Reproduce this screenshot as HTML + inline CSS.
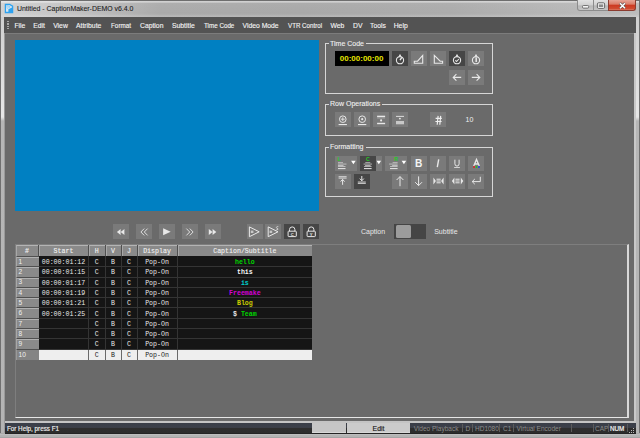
<!DOCTYPE html><html><head><meta charset="utf-8"><style>
*{margin:0;padding:0;box-sizing:border-box}
html,body{width:640px;height:438px;overflow:hidden;background:#707070;font-family:"Liberation Sans",sans-serif}
div{position:absolute}
.mi{top:21.7px;font-size:6.8px;color:#f4f4f4;white-space:pre;line-height:8px;-webkit-text-stroke:0.12px #f4f4f4}
.grp{border:1px solid #d6d6d6}
.gl{font-size:7px;color:#f0f0f0;background:#6a6a6a;padding:0 2.2px 0 1px;-webkit-text-stroke:0.1px #f0f0f0;line-height:8px;white-space:pre}
.b{width:16px;height:15px;background:#7a7a7a}
.d{background:#464646}
.st{font-size:6.3px;white-space:pre;line-height:8px}
.mono{font-family:"Liberation Mono",monospace;font-size:6.6px;line-height:8px;white-space:pre;text-align:center}
</style></head><body>
<div style="left:0;top:0;width:640px;height:17px;background:linear-gradient(90deg,#d2d2d2 0,#cdcdcd 20px,#bebebe 90px,#aaaaaa 160px,#a8a8a8 300px,#ababab 450px,#b6b6b6 560px,#bcbcbc 640px);border-top:1px solid #6e6e6e"></div>
<div style="left:0;top:1px;width:640px;height:16px;background:linear-gradient(rgba(255,255,255,0.45) 0,rgba(255,255,255,0.45) 1px,rgba(255,255,255,0.05) 2.5px,rgba(255,255,255,0) 12px,rgba(255,255,255,0.06) 13.8px,rgba(255,255,255,0.16) 15px,rgba(255,255,255,0.16) 16px)"></div>
<div style="left:0;top:1px;width:1px;height:437px;background:#707070"></div>
<div style="left:1px;top:17px;width:3px;height:421px;background:linear-gradient(#cfcfcf 0,#e4e4e4 90px,#e6e6e6 100px,#b6b6b6 104px,#b4b4b4 100%)"></div>
<div style="left:4px;top:17px;width:1px;height:421px;background:#9a9a9a"></div>
<div style="left:636px;top:17px;width:3px;height:421px;background:linear-gradient(#cfcfcf 0,#e4e4e4 90px,#e6e6e6 100px,#b6b6b6 104px,#b4b4b4 100%)"></div>
<div style="left:639px;top:1px;width:1px;height:437px;background:#707070"></div>
<div style="left:0;top:433px;width:640px;height:5px;background:linear-gradient(#9a9a9a 0,#b8b8b8 1px,#c2c2c2 2px,#a6a6a6 3px,#c0c0c0 4px,#8a8a8a 5px)"></div>
<div style="left:16.9px;top:3.7px;font-size:7.6px;color:#1a1a1a;white-space:pre;line-height:9px;-webkit-text-stroke:0.1px #1a1a1a;transform:scaleX(0.91);transform-origin:0 0">Untitled - CaptionMaker-DEMO v6.4.0</div>
<div style="left:577px;top:0;width:17px;height:11px;border:1px solid #8c8c8c;border-top:none;border-radius:0 0 0 3px;background:linear-gradient(#e2e2e2,#d2d2d2 45%,#b8b8b8 60%,#c6c6c6)"></div>
<div style="left:593px;top:0;width:16px;height:11px;border:1px solid #8c8c8c;border-top:none;background:linear-gradient(#e2e2e2,#d2d2d2 45%,#b8b8b8 60%,#c6c6c6)"></div>
<div style="left:608px;top:0;width:28px;height:11px;border:1px solid #8c3c30;border-top:none;border-radius:0 0 3px 0;background:linear-gradient(#e6a496,#dc7e6a 40%,#cc3a22 55%,#d04a30 85%,#dc7a64)"></div>
<div style="left:4px;top:17px;width:632px;height:16px;background:#535353"></div>
<div style="left:7.4px;top:21.2px;width:1.2px;height:1.3px;background:#a8a8a8"></div>
<div style="left:7.4px;top:23.4px;width:1.2px;height:1.3px;background:#a8a8a8"></div>
<div style="left:7.4px;top:25.6px;width:1.2px;height:1.3px;background:#a8a8a8"></div>
<div style="left:7.4px;top:27.8px;width:1.2px;height:1.3px;background:#a8a8a8"></div>
<div class="mi" style="left:14.4px">File</div>
<div class="mi" style="left:33.2px">Edit</div>
<div class="mi" style="left:53.2px">View</div>
<div class="mi" style="left:76px">Attribute</div>
<div class="mi" style="left:111.2px;transform:scaleX(0.93);transform-origin:0 0">Format</div>
<div class="mi" style="left:140px">Caption</div>
<div class="mi" style="left:172px">Subtitle</div>
<div class="mi" style="left:203.7px;transform:scaleX(0.92);transform-origin:0 0">Time Code</div>
<div class="mi" style="left:242.5px">Video Mode</div>
<div class="mi" style="left:287.5px;transform:scaleX(0.91);transform-origin:0 0">VTR Control</div>
<div class="mi" style="left:330.5px">Web</div>
<div class="mi" style="left:353px">DV</div>
<div class="mi" style="left:370px">Tools</div>
<div class="mi" style="left:393.7px">Help</div>
<div style="left:5px;top:33px;width:631px;height:390px;background:#c8c8c8"></div>
<div style="left:5px;top:33px;width:629px;height:388px;background:#6a6a6a;border-top:1px solid #7c7c7c"></div>
<div style="left:15px;top:39.6px;width:303.6px;height:171.4px;background:#0080c2"></div>
<div class="grp" style="left:325px;top:43px;width:168px;height:51px"></div>
<div class="gl" style="left:329px;top:39.5px">Time Code</div>
<div class="grp" style="left:325px;top:104px;width:168px;height:32px"></div>
<div class="gl" style="left:329px;top:100px">Row Operations</div>
<div class="grp" style="left:325px;top:147px;width:168px;height:50px"></div>
<div class="gl" style="left:329px;top:143px">Formatting</div>
<div style="left:334.5px;top:51px;width:54px;height:15px;background:#000"></div>
<div style="left:339.8px;top:54.3px;font-size:8px;font-weight:bold;color:#e6e600;line-height:9px">00:00:00:00</div>
<div class="b d" style="left:392px;top:51px;width:16px;height:15px"></div>
<div class="b" style="left:411px;top:51px;width:16px;height:15px"></div>
<div class="b" style="left:430px;top:51px;width:16px;height:15px"></div>
<div class="b d" style="left:449px;top:51px;width:16px;height:15px"></div>
<div class="b" style="left:468px;top:51px;width:16px;height:15px"></div>
<div class="b" style="left:449px;top:70px;width:16px;height:15px"></div>
<div class="b" style="left:468px;top:70px;width:16px;height:15px"></div>
<div class="b" style="left:335px;top:112.3px;width:16px;height:15px"></div>
<div class="b" style="left:354px;top:112.3px;width:16px;height:15px"></div>
<div class="b" style="left:373px;top:112.3px;width:16px;height:15px"></div>
<div class="b" style="left:392px;top:112.3px;width:16px;height:15px"></div>
<div class="b" style="left:430px;top:112.3px;width:16px;height:15px"></div>
<div style="left:465.5px;top:116px;font-size:7px;color:#f0f0f0;line-height:8px">10</div>
<div class="b" style="left:335px;top:155.7px;width:22px;height:15px"></div>
<div class="b d" style="left:360px;top:155.7px;width:16px;height:15px"></div>
<div class="b" style="left:376px;top:155.7px;width:6px;height:15px"></div>
<div class="b" style="left:385px;top:155.7px;width:22px;height:15px"></div>
<div class="b" style="left:411px;top:155.7px;width:16px;height:15px"></div>
<div class="b" style="left:430px;top:155.7px;width:16px;height:15px"></div>
<div class="b" style="left:449px;top:155.7px;width:16px;height:15px"></div>
<div class="b" style="left:468px;top:155.7px;width:16px;height:15px"></div>
<div class="b" style="left:335px;top:174px;width:16px;height:15px"></div>
<div class="b d" style="left:354px;top:174px;width:16px;height:15px"></div>
<div class="b" style="left:392px;top:174px;width:16px;height:15px"></div>
<div class="b" style="left:411px;top:174px;width:16px;height:15px"></div>
<div class="b" style="left:430px;top:174px;width:16px;height:15px"></div>
<div class="b" style="left:449px;top:174px;width:16px;height:15px"></div>
<div class="b" style="left:468px;top:174px;width:16px;height:15px"></div>
<div class="b" style="left:113px;top:224px;width:16px;height:15px"></div>
<div class="b" style="left:136px;top:224px;width:16px;height:15px"></div>
<div class="b" style="left:159px;top:224px;width:16px;height:15px"></div>
<div class="b" style="left:182px;top:224px;width:16px;height:15px"></div>
<div class="b" style="left:205px;top:224px;width:16px;height:15px"></div>
<div class="b" style="left:246.5px;top:224px;width:16px;height:15px"></div>
<div class="b" style="left:265px;top:224px;width:16px;height:15px"></div>
<div class="b d" style="left:284px;top:224px;width:16px;height:15px"></div>
<div class="b d" style="left:303px;top:224px;width:16px;height:15px"></div>
<div style="left:361px;top:227.6px;font-size:7px;color:#e8e8e8;line-height:8px">Caption</div>
<div style="left:394px;top:224px;width:32px;height:15px;background:#454545"></div>
<div style="left:395.5px;top:225.3px;width:15px;height:12.5px;background:#9c9c9c;border-radius:1.5px"></div>
<div style="left:434.2px;top:227.6px;font-size:7px;color:#e8e8e8;line-height:8px">Subtitle</div>
<svg style="position:absolute;left:0;top:0" width="640" height="438" viewBox="0 0 640 438"><path d="M5.4,4.5 H9.6 L12.6,6.2 V12.5 H5.4 Z" fill="#dbe8f0" stroke="#2ea2f0" stroke-width="1.3"/><path d="M6.9,5.8 L10.2,6.9 L7.2,8.4 Z" fill="#eef4f8" stroke="#6cbcf0" stroke-width="0.6"/><path d="M8.4,9.2 L12.6,7.2 V12.5 H8.4 Z" fill="#2ea2f0"/><rect x="582.5" y="5.5" width="6.2" height="2.6" rx="1" fill="#f4f4f4" stroke="#5a5a5a" stroke-width="0.8"/><rect x="597.4" y="2.8" width="7.2" height="5.6" rx="1.2" fill="#f4f4f4" stroke="#5a5a5a" stroke-width="0.9"/><rect x="598.8" y="4.4" width="4.4" height="2.6" fill="#8a8a8a"/><path d="M620,3.2 L625,8.2 M625,3.2 L620,8.2" stroke="#505050" stroke-width="2.6"/><path d="M620,3.2 L625,8.2 M625,3.2 L620,8.2" stroke="#ffffff" stroke-width="1.5"/><circle cx="400" cy="60.2" r="3.6" fill="none" stroke="#e8e8e8" stroke-width="1.1"/><rect x="399.1" y="54.6" width="1.8" height="1.6" fill="#e8e8e8"/><path d="M400,60.2 L401.9,57.4" stroke="#e8e8e8" stroke-width="1.4"/><path d="M414.3,61.2 H417.6 L422.7,55.4 V63.3 H414.3 Z" fill="none" stroke="#e8e8e8" stroke-width="1.1"/><path d="M434.3,55.4 L440.2,61.2 H442.6 V63.3 H434.3 Z" fill="none" stroke="#e8e8e8" stroke-width="1.1"/><circle cx="457" cy="60.2" r="3.6" fill="none" stroke="#e8e8e8" stroke-width="1.1"/><rect x="456.1" y="54.6" width="1.8" height="1.6" fill="#e8e8e8"/><path d="M455.2,60.3 L456.6,61.5 L458.9,59" fill="none" stroke="#e8e8e8" stroke-width="1.1"/><circle cx="476" cy="60.2" r="3.6" fill="none" stroke="#e8e8e8" stroke-width="1.1"/><rect x="475.1" y="54.6" width="1.8" height="1.6" fill="#e8e8e8"/><path d="M476.2,57.6 V62" stroke="#e8e8e8" stroke-width="1.5"/><path d="M453.2,77.4 H461.2 M456.4,74.2 L453.2,77.4 L456.4,80.6" fill="none" stroke="#e8e8e8" stroke-width="1.1"/><path d="M471.8,77.4 H479.8 M476.6,74.2 L479.8,77.4 L476.6,80.6" fill="none" stroke="#e8e8e8" stroke-width="1.1"/><circle cx="342.8" cy="119.2" r="3.3" fill="none" stroke="#e8e8e8" stroke-width="1"/><path d="M342.8,117.3 V121.1 M340.9,119.2 H344.7" stroke="#e8e8e8" stroke-width="0.9"/><rect x="338.6" y="124" width="8.3" height="1.1" fill="#e8e8e8"/><circle cx="362.2" cy="119.2" r="3.3" fill="none" stroke="#e8e8e8" stroke-width="1"/><circle cx="362.2" cy="119.2" r="1.1" fill="#e8e8e8"/><rect x="358" y="124" width="8.3" height="1.1" fill="#e8e8e8"/><rect x="377.1" y="115.7" width="8" height="1.3" fill="#e8e8e8"/><rect x="377.1" y="117.5" width="8" height="0.8" fill="#b8b8b8"/><circle cx="381.1" cy="120.4" r="1.05" fill="#e8e8e8"/><rect x="377.1" y="122.8" width="8" height="1.4" fill="#e8e8e8"/><rect x="396" y="115.9" width="8" height="0.9" fill="#e8e8e8"/><circle cx="399.9" cy="118.6" r="0.95" fill="#e8e8e8"/><rect x="396" y="121" width="8" height="3.3" fill="#c8c8c8"/><path d="M438.1,115.9 L437.2,124.7 M440.7,115.9 L439.8,124.7 M435.6,118.4 H441.8 M435.4,121.5 H441.6" stroke="#f0f0f0" stroke-width="1.15"/><text x="339.2" y="160.9" font-size="5.2" font-weight="bold" fill="#22d022" font-family="Liberation Sans" text-anchor="middle">L</text><rect x="338.00" y="162.4" width="5" height="0.7" fill="#d8d8d8"/><rect x="338.00" y="163.7" width="8.5" height="0.7" fill="#d8d8d8"/><rect x="338.00" y="165" width="5.5" height="0.7" fill="#d8d8d8"/><rect x="338.00" y="166.3" width="7.5" height="0.7" fill="#d8d8d8"/><path d="M351.1,160.8 H355.70000000000005 L353.40000000000003,164.3 Z" fill="#ffffff"/><rect x="338" y="168.1" width="7.5" height="1" fill="#e8e8e8"/><text x="367.8" y="160.9" font-size="5.2" font-weight="bold" fill="#22d022" font-family="Liberation Sans" text-anchor="middle">C</text><rect x="365.30" y="162.4" width="5" height="0.7" fill="#d8d8d8"/><rect x="363.55" y="163.7" width="8.5" height="0.7" fill="#d8d8d8"/><rect x="365.05" y="165" width="5.5" height="0.7" fill="#d8d8d8"/><rect x="364.05" y="166.3" width="7.5" height="0.7" fill="#d8d8d8"/><path d="M376.5,160.8 H381.1 L378.8,164.3 Z" fill="#ffffff"/><rect x="364" y="168.1" width="7.6" height="1" fill="#e8e8e8"/><text x="396" y="160.9" font-size="5.2" font-weight="bold" fill="#22d022" font-family="Liberation Sans" text-anchor="middle">R</text><rect x="392.60" y="162.4" width="5" height="0.7" fill="#d8d8d8"/><rect x="389.10" y="163.7" width="8.5" height="0.7" fill="#d8d8d8"/><rect x="392.10" y="165" width="5.5" height="0.7" fill="#d8d8d8"/><rect x="390.10" y="166.3" width="7.5" height="0.7" fill="#d8d8d8"/><path d="M401.6,160.8 H406.20000000000005 L403.90000000000003,164.3 Z" fill="#ffffff"/><rect x="390" y="168.1" width="7.6" height="1" fill="#e8e8e8"/><text x="418.8" y="167.2" font-size="10.2" font-weight="bold" fill="#f4f4f4" font-family="Liberation Sans" text-anchor="middle">B</text><path d="M438.7,159.4 L437.3,167.2" stroke="#e8e8e8" stroke-width="1.4"/><path d="M454.9,159.7 V163.8 Q454.9,166.1 457,166.1 Q459.1,166.1 459.1,163.8 V159.7" fill="none" stroke="#e8e8e8" stroke-width="1"/><rect x="454.1" y="167.1" width="5.8" height="0.8" fill="#e8e8e8"/><path d="M473.7,166 L476.5,159.4 L479.3,166 M474.6,164 H478.4" stroke="#e8e8e8" stroke-width="1.3" fill="none"/><circle cx="474" cy="166.9" r="1" fill="#e02020"/><circle cx="476.5" cy="166.9" r="1" fill="#20c020"/><circle cx="479" cy="166.9" r="1" fill="#2040e0"/><rect x="338.6" y="176.2" width="8" height="0.9" fill="#d8d8d8"/><rect x="338.6" y="177.6" width="8" height="0.9" fill="#e8e8e8"/><path d="M342.6,184.8 V179.6 M340.6,181.6 L342.6,179.4 L344.6,181.6" fill="none" stroke="#e8e8e8" stroke-width="1"/><path d="M361.8,176 V180.6 M359.8,178.6 L361.8,180.8 L363.8,178.6" fill="none" stroke="#e8e8e8" stroke-width="1"/><rect x="357.8" y="181.6" width="8" height="0.9" fill="#e8e8e8"/><rect x="357.8" y="183.1" width="8" height="0.9" fill="#d0d0d0"/><path d="M400,186.2 V176.6 M396.6,180 L400,176.6 L403.4,180" fill="none" stroke="#e8e8e8" stroke-width="1"/><path d="M418.6,176.4 V185.6 M415.2,182.2 L418.6,185.6 L422,182.2" fill="none" stroke="#e8e8e8" stroke-width="1"/><path d="M433.4,177.6 L435.9,181 L433.4,184.4 Z M443.6,177.6 L441.1,181 L443.6,184.4 Z" fill="#e8e8e8"/><rect x="436.5" y="178.7" width="4.2" height="1" fill="#e8e8e8"/><rect x="436.5" y="180.5" width="4.2" height="1" fill="#e8e8e8"/><rect x="436.5" y="182.3" width="4.2" height="1" fill="#e8e8e8"/><path d="M454.4,177.6 L451.9,181 L454.4,184.4 Z M460.8,177.6 L463.3,181 L460.8,184.4 Z" fill="#e8e8e8"/><rect x="455.4" y="178.7" width="4.2" height="1" fill="#e8e8e8"/><rect x="455.4" y="180.5" width="4.2" height="1" fill="#e8e8e8"/><rect x="455.4" y="182.3" width="4.2" height="1" fill="#e8e8e8"/><path d="M480.3,176.8 V181.6 H472.2 M474.8,179 L472.2,181.6 L474.8,184.2" fill="none" stroke="#e8e8e8" stroke-width="1"/><path d="M120.6,228.9 L116.9,232 L120.6,235.1 Z M124.4,228.9 L120.7,232 L124.4,235.1 Z" fill="#e8e8e8"/><path d="M144.2,228.6 L140.9,232 L144.2,235.4 M147.6,228.6 L144.3,232 L147.6,235.4" fill="none" stroke="#e8e8e8" stroke-width="0.9"/><path d="M163.1,228.3 L170.7,231.8 L163.1,235.3 Z" fill="#e8e8e8"/><path d="M186.4,228.6 L189.7,232 L186.4,235.4 M189.8,228.6 L193.1,232 L189.8,235.4" fill="none" stroke="#e8e8e8" stroke-width="0.9"/><path d="M208.8,228.9 L212.5,232 L208.8,235.1 Z M212.6,228.9 L216.3,232 L212.6,235.1 Z" fill="#e8e8e8"/><path d="M249.4,226.9 L259.2,231.8 L249.4,236.7 Z" fill="none" stroke="#e8e8e8" stroke-width="1"/><rect x="250.8" y="230.6" width="2.6" height="2.4" fill="#c8c8c8"/><path d="M268.2,226.9 L278,231.8 L268.2,236.7 Z" fill="none" stroke="#e8e8e8" stroke-width="1"/><rect x="269.6" y="230.6" width="2.6" height="2.4" fill="#c8c8c8"/><path d="M278.3,226.6 Q276.3,226.4 276.4,227.6 Q276.6,228.6 278,228.8 Q278.8,229.6 276.3,229.8" fill="none" stroke="#e8e8e8" stroke-width="0.7"/><path d="M289.5,231.2 V229.6 A2.7,2.7 0 0 1 294.9,229.6 V231.2" fill="none" stroke="#e8e8e8" stroke-width="1"/><rect x="288.1" y="231.2" width="8.2" height="5.4" rx="0.6" fill="none" stroke="#e8e8e8" stroke-width="1"/><text x="292.2" y="235.6" font-size="4.2" font-weight="bold" fill="#e8e8e8" font-family="Liberation Sans" text-anchor="middle">C</text><path d="M308.5,231.2 V229.6 A2.7,2.7 0 0 1 313.9,229.6 V231.2" fill="none" stroke="#e8e8e8" stroke-width="1"/><rect x="307.1" y="231.2" width="8.2" height="5.4" rx="0.6" fill="none" stroke="#e8e8e8" stroke-width="1"/><text x="311.2" y="235.6" font-size="4.2" font-weight="bold" fill="#e8e8e8" font-family="Liberation Sans" text-anchor="middle">Y</text></svg>
<div style="left:15px;top:244px;width:614px;height:174px;background:#6a6a6a;border-top:1px solid #7e7e7e;border-left:1px solid #7e7e7e;border-right:2px solid #d8d8d8;border-bottom:1px solid #e6e6e6"></div>
<div style="left:15.5px;top:245px;width:296.7px;height:12px;background:#505050"></div>
<div style="left:16px;top:245px;width:22px;height:12px;background:#8a8a8a;border-top:1px solid #b4b4b4;border-left:1px solid #a8a8a8;border-bottom:1px solid #505050"></div>
<div class="mono" style="left:16px;top:248px;width:22px;color:#f2f2f2;-webkit-text-stroke:0.1px #f2f2f2">#</div>
<div style="left:39px;top:245px;width:49px;height:12px;background:#8a8a8a;border-top:1px solid #b4b4b4;border-left:1px solid #a8a8a8;border-bottom:1px solid #505050"></div>
<div class="mono" style="left:39px;top:248px;width:49px;color:#f2f2f2;-webkit-text-stroke:0.1px #f2f2f2">Start</div>
<div style="left:89px;top:245px;width:15.5px;height:12px;background:#8a8a8a;border-top:1px solid #b4b4b4;border-left:1px solid #a8a8a8;border-bottom:1px solid #505050"></div>
<div class="mono" style="left:89px;top:248px;width:15.5px;color:#f2f2f2;-webkit-text-stroke:0.1px #f2f2f2">H</div>
<div style="left:105.5px;top:245px;width:15.0px;height:12px;background:#8a8a8a;border-top:1px solid #b4b4b4;border-left:1px solid #a8a8a8;border-bottom:1px solid #505050"></div>
<div class="mono" style="left:105.5px;top:248px;width:15.0px;color:#f2f2f2;-webkit-text-stroke:0.1px #f2f2f2">V</div>
<div style="left:121.5px;top:245px;width:15.0px;height:12px;background:#8a8a8a;border-top:1px solid #b4b4b4;border-left:1px solid #a8a8a8;border-bottom:1px solid #505050"></div>
<div class="mono" style="left:121.5px;top:248px;width:15.0px;color:#f2f2f2;-webkit-text-stroke:0.1px #f2f2f2">J</div>
<div style="left:137.5px;top:245px;width:39.0px;height:12px;background:#8a8a8a;border-top:1px solid #b4b4b4;border-left:1px solid #a8a8a8;border-bottom:1px solid #505050"></div>
<div class="mono" style="left:137.5px;top:248px;width:39.0px;color:#f2f2f2;-webkit-text-stroke:0.1px #f2f2f2">Display</div>
<div style="left:177.5px;top:245px;width:134.7px;height:12px;background:#8a8a8a;border-top:1px solid #b4b4b4;border-left:1px solid #a8a8a8;border-bottom:1px solid #505050"></div>
<div class="mono" style="left:177.5px;top:248px;width:134.7px;color:#f2f2f2;-webkit-text-stroke:0.1px #f2f2f2">Caption/Subtitle</div>
<div style="left:38.5px;top:256px;width:273.7px;height:94px;background:#343434"></div>
<div style="left:15.5px;top:257px;width:23px;height:10px;background:#8a8a8a;border-top:1px solid #b0b0b0;border-left:1px solid #a8a8a8;border-bottom:1px solid #505050"></div>
<div style="left:18.5px;top:257.9px;font-size:6.6px;line-height:8px;color:#f0f0f0">1</div>
<div style="left:38.5px;top:256px;width:49.5px;height:10px;background:#151515"></div>
<div style="left:89px;top:256px;width:15.5px;height:10px;background:#151515"></div>
<div style="left:105.5px;top:256px;width:15.0px;height:10px;background:#151515"></div>
<div style="left:121.5px;top:256px;width:15.0px;height:10px;background:#151515"></div>
<div style="left:137.5px;top:256px;width:39.0px;height:10px;background:#151515"></div>
<div style="left:177.5px;top:256px;width:134.7px;height:10px;background:#151515"></div>
<div class="mono" style="left:39px;top:259.1px;width:49px;color:#e8e8e8">00:00:01:12</div>
<div class="mono" style="left:89px;top:259.1px;width:15.5px;color:#e8e8e8">C</div>
<div class="mono" style="left:105.5px;top:259.1px;width:15.0px;color:#e8e8e8">B</div>
<div class="mono" style="left:121.5px;top:259.1px;width:15.0px;color:#e8e8e8">C</div>
<div class="mono" style="left:137.5px;top:259.1px;width:39.0px;color:#e8e8e8">Pop-On</div>
<div class="mono" style="left:177.5px;top:259.1px;width:134.7px;color:#00d400;font-weight:bold">hello</div>
<div style="left:15.5px;top:267px;width:23px;height:11px;background:#8a8a8a;border-top:1px solid #b0b0b0;border-left:1px solid #a8a8a8;border-bottom:1px solid #505050"></div>
<div style="left:18.5px;top:268.18px;font-size:6.6px;line-height:8px;color:#f0f0f0">2</div>
<div style="left:38.5px;top:267px;width:49.5px;height:10px;background:#151515"></div>
<div style="left:89px;top:267px;width:15.5px;height:10px;background:#151515"></div>
<div style="left:105.5px;top:267px;width:15.0px;height:10px;background:#151515"></div>
<div style="left:121.5px;top:267px;width:15.0px;height:10px;background:#151515"></div>
<div style="left:137.5px;top:267px;width:39.0px;height:10px;background:#151515"></div>
<div style="left:177.5px;top:267px;width:134.7px;height:10px;background:#151515"></div>
<div class="mono" style="left:39px;top:269.38px;width:49px;color:#e8e8e8">00:00:01:15</div>
<div class="mono" style="left:89px;top:269.38px;width:15.5px;color:#e8e8e8">C</div>
<div class="mono" style="left:105.5px;top:269.38px;width:15.0px;color:#e8e8e8">B</div>
<div class="mono" style="left:121.5px;top:269.38px;width:15.0px;color:#e8e8e8">C</div>
<div class="mono" style="left:137.5px;top:269.38px;width:39.0px;color:#e8e8e8">Pop-On</div>
<div class="mono" style="left:177.5px;top:269.38px;width:134.7px;color:#f4f4f4;font-weight:bold">this</div>
<div style="left:15.5px;top:278px;width:23px;height:10px;background:#8a8a8a;border-top:1px solid #b0b0b0;border-left:1px solid #a8a8a8;border-bottom:1px solid #505050"></div>
<div style="left:18.5px;top:278.46px;font-size:6.6px;line-height:8px;color:#f0f0f0">3</div>
<div style="left:38.5px;top:278px;width:49.5px;height:9px;background:#151515"></div>
<div style="left:89px;top:278px;width:15.5px;height:9px;background:#151515"></div>
<div style="left:105.5px;top:278px;width:15.0px;height:9px;background:#151515"></div>
<div style="left:121.5px;top:278px;width:15.0px;height:9px;background:#151515"></div>
<div style="left:137.5px;top:278px;width:39.0px;height:9px;background:#151515"></div>
<div style="left:177.5px;top:278px;width:134.7px;height:9px;background:#151515"></div>
<div class="mono" style="left:39px;top:279.66px;width:49px;color:#e8e8e8">00:00:01:17</div>
<div class="mono" style="left:89px;top:279.66px;width:15.5px;color:#e8e8e8">C</div>
<div class="mono" style="left:105.5px;top:279.66px;width:15.0px;color:#e8e8e8">B</div>
<div class="mono" style="left:121.5px;top:279.66px;width:15.0px;color:#e8e8e8">C</div>
<div class="mono" style="left:137.5px;top:279.66px;width:39.0px;color:#e8e8e8">Pop-On</div>
<div class="mono" style="left:177.5px;top:279.66px;width:134.7px;color:#00cccc;font-weight:bold">is</div>
<div style="left:15.5px;top:288px;width:23px;height:10px;background:#8a8a8a;border-top:1px solid #b0b0b0;border-left:1px solid #a8a8a8;border-bottom:1px solid #505050"></div>
<div style="left:18.5px;top:288.74px;font-size:6.6px;line-height:8px;color:#f0f0f0">4</div>
<div style="left:38.5px;top:288px;width:49.5px;height:9px;background:#151515"></div>
<div style="left:89px;top:288px;width:15.5px;height:9px;background:#151515"></div>
<div style="left:105.5px;top:288px;width:15.0px;height:9px;background:#151515"></div>
<div style="left:121.5px;top:288px;width:15.0px;height:9px;background:#151515"></div>
<div style="left:137.5px;top:288px;width:39.0px;height:9px;background:#151515"></div>
<div style="left:177.5px;top:288px;width:134.7px;height:9px;background:#151515"></div>
<div class="mono" style="left:39px;top:289.94px;width:49px;color:#e8e8e8">00:00:01:19</div>
<div class="mono" style="left:89px;top:289.94px;width:15.5px;color:#e8e8e8">C</div>
<div class="mono" style="left:105.5px;top:289.94px;width:15.0px;color:#e8e8e8">B</div>
<div class="mono" style="left:121.5px;top:289.94px;width:15.0px;color:#e8e8e8">C</div>
<div class="mono" style="left:137.5px;top:289.94px;width:39.0px;color:#e8e8e8">Pop-On</div>
<div class="mono" style="left:177.5px;top:289.94px;width:134.7px;color:#d400d4;font-weight:bold">Freemake</div>
<div style="left:15.5px;top:298px;width:23px;height:10px;background:#8a8a8a;border-top:1px solid #b0b0b0;border-left:1px solid #a8a8a8;border-bottom:1px solid #505050"></div>
<div style="left:18.5px;top:299.02px;font-size:6.6px;line-height:8px;color:#f0f0f0">5</div>
<div style="left:38.5px;top:298px;width:49.5px;height:9px;background:#151515"></div>
<div style="left:89px;top:298px;width:15.5px;height:9px;background:#151515"></div>
<div style="left:105.5px;top:298px;width:15.0px;height:9px;background:#151515"></div>
<div style="left:121.5px;top:298px;width:15.0px;height:9px;background:#151515"></div>
<div style="left:137.5px;top:298px;width:39.0px;height:9px;background:#151515"></div>
<div style="left:177.5px;top:298px;width:134.7px;height:9px;background:#151515"></div>
<div class="mono" style="left:39px;top:300.22px;width:49px;color:#e8e8e8">00:00:01:21</div>
<div class="mono" style="left:89px;top:300.22px;width:15.5px;color:#e8e8e8">C</div>
<div class="mono" style="left:105.5px;top:300.22px;width:15.0px;color:#e8e8e8">B</div>
<div class="mono" style="left:121.5px;top:300.22px;width:15.0px;color:#e8e8e8">C</div>
<div class="mono" style="left:137.5px;top:300.22px;width:39.0px;color:#e8e8e8">Pop-On</div>
<div class="mono" style="left:177.5px;top:300.22px;width:134.7px;color:#cccc00;font-weight:bold">Blog</div>
<div style="left:15.5px;top:308px;width:23px;height:11px;background:#8a8a8a;border-top:1px solid #b0b0b0;border-left:1px solid #a8a8a8;border-bottom:1px solid #505050"></div>
<div style="left:18.5px;top:309.3px;font-size:6.6px;line-height:8px;color:#f0f0f0">6</div>
<div style="left:38.5px;top:308px;width:49.5px;height:10px;background:#151515"></div>
<div style="left:89px;top:308px;width:15.5px;height:10px;background:#151515"></div>
<div style="left:105.5px;top:308px;width:15.0px;height:10px;background:#151515"></div>
<div style="left:121.5px;top:308px;width:15.0px;height:10px;background:#151515"></div>
<div style="left:137.5px;top:308px;width:39.0px;height:10px;background:#151515"></div>
<div style="left:177.5px;top:308px;width:134.7px;height:10px;background:#151515"></div>
<div class="mono" style="left:39px;top:310.5px;width:49px;color:#e8e8e8">00:00:01:25</div>
<div class="mono" style="left:89px;top:310.5px;width:15.5px;color:#e8e8e8">C</div>
<div class="mono" style="left:105.5px;top:310.5px;width:15.0px;color:#e8e8e8">B</div>
<div class="mono" style="left:121.5px;top:310.5px;width:15.0px;color:#e8e8e8">C</div>
<div class="mono" style="left:137.5px;top:310.5px;width:39.0px;color:#e8e8e8">Pop-On</div>
<div class="mono" style="left:177.5px;top:310.5px;width:134.7px;color:#00d400;font-weight:bold"><span style="color:#e8e8e8">$</span> Team</div>
<div style="left:15.5px;top:319px;width:23px;height:10px;background:#8a8a8a;border-top:1px solid #b0b0b0;border-left:1px solid #a8a8a8;border-bottom:1px solid #505050"></div>
<div style="left:18.5px;top:319.58px;font-size:6.6px;line-height:8px;color:#f0f0f0">7</div>
<div style="left:38.5px;top:319px;width:49.5px;height:9px;background:#151515"></div>
<div style="left:89px;top:319px;width:15.5px;height:9px;background:#151515"></div>
<div style="left:105.5px;top:319px;width:15.0px;height:9px;background:#151515"></div>
<div style="left:121.5px;top:319px;width:15.0px;height:9px;background:#151515"></div>
<div style="left:137.5px;top:319px;width:39.0px;height:9px;background:#151515"></div>
<div style="left:177.5px;top:319px;width:134.7px;height:9px;background:#151515"></div>
<div class="mono" style="left:89px;top:320.78px;width:15.5px;color:#e8e8e8">C</div>
<div class="mono" style="left:105.5px;top:320.78px;width:15.0px;color:#e8e8e8">B</div>
<div class="mono" style="left:121.5px;top:320.78px;width:15.0px;color:#e8e8e8">C</div>
<div class="mono" style="left:137.5px;top:320.78px;width:39.0px;color:#e8e8e8">Pop-On</div>
<div style="left:15.5px;top:329px;width:23px;height:10px;background:#8a8a8a;border-top:1px solid #b0b0b0;border-left:1px solid #a8a8a8;border-bottom:1px solid #505050"></div>
<div style="left:18.5px;top:329.86px;font-size:6.6px;line-height:8px;color:#f0f0f0">8</div>
<div style="left:38.5px;top:329px;width:49.5px;height:9px;background:#151515"></div>
<div style="left:89px;top:329px;width:15.5px;height:9px;background:#151515"></div>
<div style="left:105.5px;top:329px;width:15.0px;height:9px;background:#151515"></div>
<div style="left:121.5px;top:329px;width:15.0px;height:9px;background:#151515"></div>
<div style="left:137.5px;top:329px;width:39.0px;height:9px;background:#151515"></div>
<div style="left:177.5px;top:329px;width:134.7px;height:9px;background:#151515"></div>
<div class="mono" style="left:89px;top:331.06px;width:15.5px;color:#e8e8e8">C</div>
<div class="mono" style="left:105.5px;top:331.06px;width:15.0px;color:#e8e8e8">B</div>
<div class="mono" style="left:121.5px;top:331.06px;width:15.0px;color:#e8e8e8">C</div>
<div class="mono" style="left:137.5px;top:331.06px;width:39.0px;color:#e8e8e8">Pop-On</div>
<div style="left:15.5px;top:339px;width:23px;height:11px;background:#8a8a8a;border-top:1px solid #b0b0b0;border-left:1px solid #a8a8a8;border-bottom:1px solid #505050"></div>
<div style="left:18.5px;top:340.14px;font-size:6.6px;line-height:8px;color:#f0f0f0">9</div>
<div style="left:38.5px;top:339px;width:49.5px;height:10px;background:#151515"></div>
<div style="left:89px;top:339px;width:15.5px;height:10px;background:#151515"></div>
<div style="left:105.5px;top:339px;width:15.0px;height:10px;background:#151515"></div>
<div style="left:121.5px;top:339px;width:15.0px;height:10px;background:#151515"></div>
<div style="left:137.5px;top:339px;width:39.0px;height:10px;background:#151515"></div>
<div style="left:177.5px;top:339px;width:134.7px;height:10px;background:#151515"></div>
<div class="mono" style="left:89px;top:341.34px;width:15.5px;color:#e8e8e8">C</div>
<div class="mono" style="left:105.5px;top:341.34px;width:15.0px;color:#e8e8e8">B</div>
<div class="mono" style="left:121.5px;top:341.34px;width:15.0px;color:#e8e8e8">C</div>
<div class="mono" style="left:137.5px;top:341.34px;width:39.0px;color:#e8e8e8">Pop-On</div>
<div style="left:15.5px;top:350px;width:23px;height:10px;background:#848484;border-left:1px solid #9a9a9a"></div>
<div style="left:18.5px;top:351.32px;font-size:6.6px;line-height:8px;color:#f0f0f0">10</div>
<div style="left:38.5px;top:350px;width:49.5px;height:10px;background:#eeeeee"></div>
<div style="left:89px;top:350px;width:15.5px;height:10px;background:#eeeeee"></div>
<div style="left:105.5px;top:350px;width:15.0px;height:10px;background:#eeeeee"></div>
<div style="left:121.5px;top:350px;width:15.0px;height:10px;background:#eeeeee"></div>
<div style="left:137.5px;top:350px;width:39.0px;height:10px;background:#eeeeee"></div>
<div style="left:177.5px;top:350px;width:134.7px;height:10px;background:#eeeeee"></div>
<div class="mono" style="left:89px;top:351.62px;width:15.5px;color:#222">C</div>
<div class="mono" style="left:105.5px;top:351.62px;width:15.0px;color:#222">B</div>
<div class="mono" style="left:121.5px;top:351.62px;width:15.0px;color:#222">C</div>
<div class="mono" style="left:137.5px;top:351.62px;width:39.0px;color:#222">Pop-On</div>
<div style="left:5px;top:421px;width:631px;height:2px;background:#c4c4c4"></div>
<div style="left:5px;top:423px;width:631px;height:10.5px;background:linear-gradient(#3a3e48 0,#3c404a 40%,#2e2e2e 50%,#2c2c2c 90%,#1e1e1e 100%)"></div>
<div style="left:312px;top:423px;width:33.5px;height:10px;background:#c6c6c6;border-bottom:1px solid #d8d8d8"></div>
<div style="left:347px;top:423px;width:62.5px;height:10px;background:#cbcbcb;border-bottom:1px solid #d8d8d8"></div>
<div style="left:461.5px;top:424px;width:1px;height:8px;background:#5a5a5a"></div>
<div style="left:471.5px;top:424px;width:1px;height:8px;background:#5a5a5a"></div>
<div style="left:499px;top:424px;width:1px;height:8px;background:#5a5a5a"></div>
<div style="left:512.5px;top:424px;width:1px;height:8px;background:#5a5a5a"></div>
<div style="left:570.5px;top:424px;width:1px;height:8px;background:#5a5a5a"></div>
<div style="left:592.5px;top:424px;width:1px;height:8px;background:#5a5a5a"></div>
<div style="left:607.5px;top:424px;width:1px;height:8px;background:#5a5a5a"></div>
<div style="left:626.5px;top:424px;width:1px;height:8px;background:#5a5a5a"></div>
<div class="st" style="left:6.9px;top:425px;color:#f0f0f0;-webkit-text-stroke:0.15px #f0f0f0">For Help, press F1</div>
<div class="st" style="left:372.6px;top:425.2px;font-size:6.9px;color:#1a1a1a;-webkit-text-stroke:0.15px #1a1a1a">Edit</div>
<div style="left:633px;top:428px;width:1px;height:1px;background:#b8b8b8"></div>
<div style="left:631px;top:430px;width:1px;height:1px;background:#b8b8b8"></div>
<div style="left:633px;top:430px;width:1px;height:1px;background:#b8b8b8"></div>
<div style="left:629px;top:432px;width:1px;height:1px;background:#b8b8b8"></div>
<div style="left:631px;top:432px;width:1px;height:1px;background:#b8b8b8"></div>
<div style="left:633px;top:432px;width:1px;height:1px;background:#b8b8b8"></div>
<div class="st" style="left:413.7px;top:424.8px;color:#8c8c8c;font-size:6.5px">Video Playback</div>
<div class="st" style="left:465.4px;top:424.8px;color:#8c8c8c;font-size:6.5px">D</div>
<div class="st" style="left:475px;top:424.8px;color:#8c8c8c;font-size:6.5px">HD1080</div>
<div class="st" style="left:503px;top:424.8px;color:#8c8c8c;font-size:6.5px">C1</div>
<div class="st" style="left:516.5px;top:424.8px;color:#8c8c8c;font-size:6.5px">Virtual Encoder</div>
<div class="st" style="left:595px;top:424.8px;color:#8c8c8c;font-size:6.5px">CAP</div>
<div class="st" style="left:610px;top:425px;color:#f4f4f4;-webkit-text-stroke:0.2px #f4f4f4">NUM</div>
</body></html>
